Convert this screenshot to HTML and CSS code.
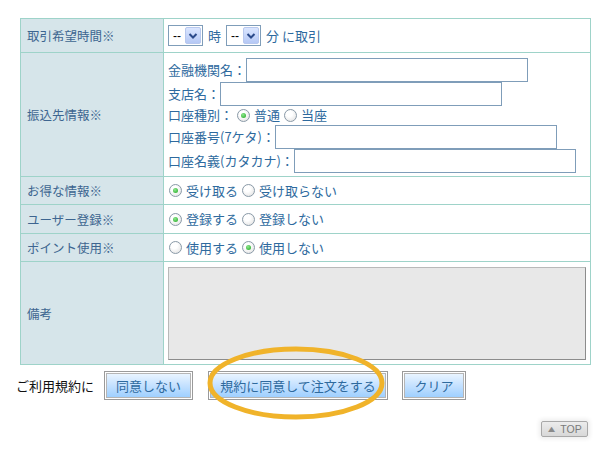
FILE: index.html
```html
<!DOCTYPE html>
<html lang="ja">
<head>
<meta charset="utf-8">
<link rel="stylesheet" href="styles.css">
</head>
<body>
<div class="page">
  <table class="form">
    <tr class="r-time">
      <th>取引希望時間※</th>
      <td>
        <div class="inline">
          <span class="sel">--<i class="arr"><svg viewBox="0 0 10 8" width="10" height="8"><path d="M1.5 2 L5 5.5 L8.5 2" fill="none" stroke="#2b4a8a" stroke-width="2"/></svg></i></span>
          <span class="txt">時</span>
          <span class="sel">--<i class="arr"><svg viewBox="0 0 10 8" width="10" height="8"><path d="M1.5 2 L5 5.5 L8.5 2" fill="none" stroke="#2b4a8a" stroke-width="2"/></svg></i></span>
          <span class="txt">分 に取引</span>
        </div>
      </td>
    </tr>
    <tr class="r-bank">
      <th>振込先情報※</th>
      <td>
        <div class="line"><span>金融機関名：</span><span class="inp"></span></div>
        <div class="line"><span>支店名：</span><span class="inp"></span></div>
        <div class="line short"><span>口座種別：</span><span class="radio on"></span><span>普通</span><span class="radio"></span><span>当座</span></div>
        <div class="line"><span>口座番号(7ケタ)：</span><span class="inp"></span></div>
        <div class="line"><span>口座名義(カタカナ)：</span><span class="inp"></span></div>
      </td>
    </tr>
    <tr class="r-opt">
      <th>お得な情報※</th>
      <td><div class="inline"><span class="radio on"></span><span>受け取る</span><span class="radio"></span><span>受け取らない</span></div></td>
    </tr>
    <tr class="r-opt r-user">
      <th>ユーザー登録※</th>
      <td><div class="inline"><span class="radio on"></span><span>登録する</span><span class="radio"></span><span>登録しない</span></div></td>
    </tr>
    <tr class="r-opt">
      <th>ポイント使用※</th>
      <td><div class="inline"><span class="radio"></span><span>使用する</span><span class="radio on"></span><span>使用しない</span></div></td>
    </tr>
    <tr class="r-note">
      <th>備考</th>
      <td><div class="area"></div></td>
    </tr>
  </table>

  <div class="actions">
    <span class="lead">ご利用規約に</span>
    <span class="btn b1"><span>同意しない</span></span>
    <span class="btn b2"><span>規約に同意して注文をする</span></span>
    <span class="btn b3"><span>クリア</span></span>
    <svg class="circle" width="180" height="76" viewBox="0 0 180 76"><ellipse cx="90" cy="38" rx="86" ry="34" fill="none" stroke="#f0b32a" stroke-width="5"/></svg>
  </div>

  <div class="totop"><span class="top"><span class="tri">▲</span> TOP</span></div>
</div>
</body>
</html>
```
FILE: styles.css
```css
* { box-sizing: border-box; }
html, body { margin: 0; padding: 0; background: #fff; }
body {
  font-family: "Noto Sans CJK JP", "Noto Sans", sans-serif;
  font-size: 13px;
  color: #2e6a9e;
}
.page { position: relative; padding-top: 18px; width: 610px; height: 454px; }

.form {
  border-collapse: collapse;
  margin-left: 20px;
  width: 571px;
}
.form th, .form td {
  border: 1px solid #9ed3c9;
  vertical-align: middle;
}
.form th {
  width: 143px;
  background: #d6e5ea;
  color: #3d6590;
  font-weight: normal;
  text-align: left;
  padding: 0 0 0 6px;
  font-size: 12.5px;
}
.form td { padding: 0 4px 0 4px; background: #fff; }

.r-time { height: 34px; }
.r-bank { height: 124px; }
.r-bank td { padding-top: 4px; padding-bottom: 3px; }
.r-opt { height: 28px; }
.r-user { height: 29px; }
.r-note { height: 103px; }
.r-note td { padding-top: 4px; padding-bottom: 4px; }

.inline { display: flex; align-items: center; line-height: 16px; }
.inline .txt { margin: 0 5px; }

.sel {
  display: inline-flex;
  align-items: center;
  justify-content: space-between;
  width: 35px;
  height: 21px;
  border: 1px solid #7f9db9;
  background: #fff;
  color: #000;
  font-family: "Liberation Sans", sans-serif;
  font-size: 12px;
  padding: 1px 1px 1px 4px;
}
.arr {
  display: flex;
  align-items: center;
  justify-content: center;
  width: 16px;
  height: 17px;
  border: 1px solid #b8c8ee;
  border-radius: 2px;
  background: linear-gradient(#dbe6ff, #b5c8f5);
}

.line { display: flex; align-items: center; height: 24px; line-height: 16px; }
.line.short { height: 19px; }
.inp {
  display: block;
  width: 282px;
  height: 24px;
  border: 1px solid #7f9db9;
  background: #fff;
}

.radio {
  display: inline-block;
  width: 13px;
  height: 13px;
  border-radius: 50%;
  border: 1px solid #8a9aa8;
  background: radial-gradient(circle at 40% 35%, #fff 30%, #dcdcdc 100%);
  margin: 0 4px 0 4px;
  position: relative;
  flex: none;
}
.inline .radio:first-child { margin-left: 1px; }
.radio.on::after {
  content: "";
  position: absolute;
  left: 3px; top: 3px;
  width: 5px; height: 5px;
  border-radius: 50%;
  background: radial-gradient(circle at 40% 35%, #8fe88f, #1ea51e);
}
.line .radio:first-of-type { margin-left: 5px; }

.area {
  width: 418px;
  height: 93px;
  background: #e8e8e8;
  border: 1px solid #b9b9b9;
  border-right-color: #8c8c8c;
  border-bottom-color: #8c8c8c;
}

.actions {
  position: relative;
  display: flex;
  align-items: center;
  margin-top: 6px;
  padding-left: 16px;
  height: 29px;
  gap: 15px;
}
.lead { color: #111; font-size: 13px; white-space: nowrap; margin-right: -5px; }
.btn {
  display: flex;
  height: 29px;
  border: 1px solid #9a9a9a;
  background: #fff;
  padding: 1px;
  flex: none;
}
.btn span {
  flex: 1;
  display: flex;
  align-items: center;
  justify-content: center;
  border: 1px solid #b5b5b5;
  background: linear-gradient(#e9f4ff 0%, #c8e3ff 45%, #9fd0ff 100%);
  color: #2e6a9e;
  font-size: 13px;
  white-space: nowrap;
}
.b1 { width: 89px; }
.b2 { width: 180px; }
.b3 { width: 64px; margin-left: -1px; }
.circle { position: absolute; left: 206px; top: -26px; }

.totop {
  display: flex;
  justify-content: flex-end;
  padding-right: 22px;
  margin-top: 21px;
}
.top {
  display: inline-flex;
  align-items: center;
  justify-content: center;
  gap: 4px;
  width: 47px;
  height: 16px;
  border: 1px solid #a8a8a8;
  border-radius: 2px;
  background: linear-gradient(#ececec, #d8d8d8);
  box-shadow: 0 0 4px 2px #eeeeee;
  color: #7a7a7a;
  font-family: "Liberation Sans", sans-serif;
  font-size: 10.5px;
}
.tri { font-size: 9px; color: #8a8a8a; transform: scaleX(1.3); }
```
